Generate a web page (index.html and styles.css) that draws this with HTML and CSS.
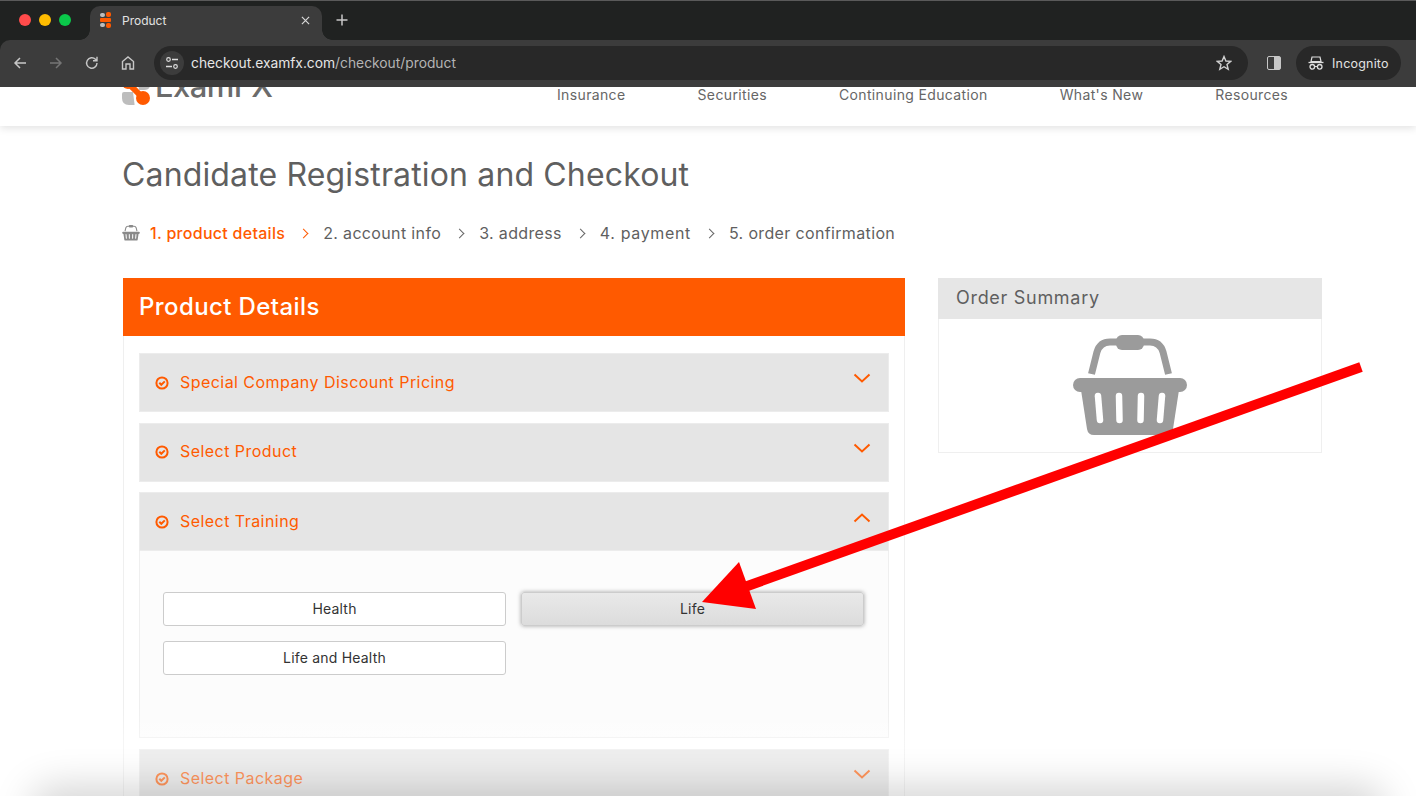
FILE: index.html
```html
<!DOCTYPE html>
<html lang="en">
<head>
	<meta charset="UTF-8">
	<title>Product</title>
	<link rel="stylesheet" href="styles.css">
</head>
<body>
<svg class="defs" width="0" height="0">
	<symbol id="basket" viewBox="0 0 116 102">
		<path d="M19.500 39 L25 17 Q28 7 38 7 H78 Q88 7 91 17 L96.500 39" fill="none" stroke="currentColor" stroke-width="7"/>
		<rect x="44" y="0" width="28" height="15" rx="6" fill="currentColor"/>
		<rect x="1" y="43" width="114" height="14" rx="7" fill="currentColor"/>
		<path d="M9 55 H107 L101 94 Q100 100 94 100 H22 Q16 100 15 94 Z" fill="currentColor"/>
		<g stroke="#fff" stroke-width="6.500" stroke-linecap="round">
			<line x1="26" y1="61" x2="28" y2="85"/>
			<line x1="47" y1="61" x2="47.500" y2="85"/>
			<line x1="69" y1="61" x2="68.500" y2="85"/>
			<line x1="90" y1="61" x2="88" y2="85"/>
		</g>
	</symbol>
	<symbol id="check" viewBox="0 0 14 14">
		<circle cx="7" cy="7" r="5.600" fill="none" stroke="currentColor" stroke-width="2"/>
		<path d="M4.300 6.800 L6.300 8.800 L9.800 5.400" fill="none" stroke="currentColor" stroke-width="2"/>
	</symbol>
	<symbol id="down" viewBox="0 0 18 10">
		<path d="M1.500 1.500 L9 8.500 L16.500 1.500" fill="none" stroke="currentColor" stroke-width="2"/>
	</symbol>
	<symbol id="mark" viewBox="0 0 28 28">
		<circle cx="6" cy="6" r="6" fill="#ff5a00"/>
		<circle cx="21" cy="21" r="7" fill="#ff5a00"/>
		<path d="M6 6 L21 21" stroke="#ff5a00" stroke-width="6"/>
		<path d="M15 1 H28 V8 Q28 13 22 13 H17 Z" fill="#bdbdbd"/>
		<path d="M0 17 Q0 15 2 15 H11 L12.500 27 V28 H7 Q0 28 0 21 Z" fill="#bdbdbd"/>
	</symbol>
</svg>

<div class="window">
	<div class="chrome">
		<div class="tabstrip">
			<div class="lights">
				<span class="light red"></span>
				<span class="light yellow"></span>
				<span class="light green"></span>
			</div>
			<div class="tab">
				<svg class="favicon" viewBox="0 0 12 16">
					<rect x="0" y="1" width="5" height="4" rx="2" fill="#bdbdbd"/>
					<rect x="6" y="0" width="5" height="5" rx="2" fill="#ff5a00"/>
					<rect x="0" y="6" width="11" height="4" rx="1" fill="#ff5a00"/>
					<rect x="0" y="11" width="5" height="4" rx="2" fill="#bdbdbd"/>
					<rect x="6" y="11" width="5" height="5" rx="2" fill="#ff5a00"/>
				</svg>
				<span class="tab-title">Product</span>
				<svg class="tab-close" viewBox="0 0 10 10"><path d="M1 1 L9 9 M9 1 L1 9" stroke="#d8d8d8" stroke-width="1.300"/></svg>
			</div>
			<svg class="newtab" viewBox="0 0 12 12"><path d="M6 0.500 V11.500 M0.500 6 H11.500" stroke="#c8c8c8" stroke-width="1.500"/></svg>
		</div>

		<div class="toolbar">
			<span class="tool"><svg viewBox="0 0 16 16"><path d="M14 8 H3 M8 3 L3 8 L8 13" fill="none" stroke="#c7c7c7" stroke-width="1.500"/></svg></span>
			<span class="tool"><svg viewBox="0 0 16 16"><path d="M2 8 H13 M8 3 L13 8 L8 13" fill="none" stroke="#757575" stroke-width="1.500"/></svg></span>
			<span class="tool"><svg viewBox="0 0 16 16"><path d="M13 8 A5.200 5.200 0 1 1 11.500 4.300 L13 5.800 M13 1.800 V5.800 H9" fill="none" stroke="#c7c7c7" stroke-width="1.400"/></svg></span>
			<span class="tool"><svg viewBox="0 0 16 16"><path d="M2.500 14 V6.500 L8 2 L13.500 6.500 V14 H10 V9 H6 V14 Z" fill="none" stroke="#c7c7c7" stroke-width="1.400"/></svg></span>
			<div class="address">
				<span class="site-info"><svg viewBox="0 0 14 14" width="14" height="14"><circle cx="3.500" cy="3.500" r="1.800" fill="none" stroke="#ddd" stroke-width="1.200"/><path d="M7 3.500 H13 M1 10.500 H7" stroke="#ddd" stroke-width="1.300"/><circle cx="10.500" cy="10.500" r="1.800" fill="none" stroke="#ddd" stroke-width="1.200"/></svg></span>
				<span class="url">checkout.examfx.com<span class="url-path">/checkout/product</span></span>
				<svg class="star" viewBox="0 0 16 16"><path d="M8 1.500 L9.900 6 L14.700 6.400 L11 9.500 L12.200 14.300 L8 11.700 L3.800 14.300 L5 9.500 L1.300 6.400 L6.100 6 Z" fill="none" stroke="#d0d0d0" stroke-width="1.400"/></svg>
			</div>
			<span class="sidepanel"><span class="sidepanel-fill"></span></span>
			<div class="incognito">
				<svg viewBox="0 0 16 14" width="16" height="14"><path d="M4 1 H12 L13 5.500 H3 Z" fill="none" stroke="#ddd" stroke-width="1.200"/><path d="M0.500 6.500 H15.500" stroke="#ddd" stroke-width="1.300"/><circle cx="4.300" cy="10.800" r="2.300" fill="none" stroke="#ddd" stroke-width="1.300"/><circle cx="11.700" cy="10.800" r="2.300" fill="none" stroke="#ddd" stroke-width="1.300"/><path d="M6.600 10.500 H9.400" stroke="#ddd" stroke-width="1.100"/></svg>
				<span>Incognito</span>
			</div>
		</div>
	</div>

	<div class="page">
		<header class="site-head">
			<div class="logo">
				<svg class="logo-mark"><use href="#mark"/></svg>
				<span class="logo-text">ExamFX</span>
			</div>
			<nav class="site-nav">
				<a>Insurance</a>
				<a>Securities</a>
				<a>Continuing Education</a>
				<a>What's New</a>
				<a>Resources</a>
			</nav>
		</header>

		<main class="content">
			<h1 class="title">Candidate Registration and Checkout</h1>

			<div class="steps">
				<svg class="steps-basket"><use href="#basket"/></svg>
				<span class="step step-active">1. product details</span>
				<span class="sep sep-active"></span>
				<span class="step">2. account info</span>
				<span class="sep"></span>
				<span class="step">3. address</span>
				<span class="sep"></span>
				<span class="step step-wide">4. payment</span>
				<span class="sep"></span>
				<span class="step">5. order confirmation</span>
			</div>

			<div class="columns">
				<section class="details">
					<h2 class="details-head">Product Details</h2>
					<div class="details-body">
						<div class="acc-head">
							<svg class="acc-check"><use href="#check"/></svg>
							<span class="acc-title">Special Company Discount Pricing</span>
							<svg class="acc-arrow"><use href="#down"/></svg>
						</div>
						<div class="acc-head">
							<svg class="acc-check"><use href="#check"/></svg>
							<span class="acc-title">Select Product</span>
							<svg class="acc-arrow"><use href="#down"/></svg>
						</div>
						<div class="acc-head acc-open">
							<svg class="acc-check"><use href="#check"/></svg>
							<span class="acc-title">Select Training</span>
							<svg class="acc-arrow acc-arrow-up"><use href="#down"/></svg>
						</div>
						<div class="acc-body">
							<button class="choice">Health</button>
							<button class="choice choice-on">Life</button>
							<button class="choice">Life and Health</button>
						</div>
						<div class="acc-head">
							<svg class="acc-check"><use href="#check"/></svg>
							<span class="acc-title">Select Package</span>
							<svg class="acc-arrow"><use href="#down"/></svg>
						</div>
					</div>
				</section>

				<aside class="summary">
					<h3 class="summary-head">Order Summary</h3>
					<div class="summary-body">
						<svg class="summary-basket"><use href="#basket"/></svg>
					</div>
				</aside>
			</div>
		</main>

		<div class="fade"></div>
		<div class="window-shadow"></div>
		<svg class="annotation" viewBox="0 0 1416 709" width="1416" height="709">
			<line x1="1361" y1="280" x2="725" y2="507" stroke="#ff0000" stroke-width="10"/>
			<polygon points="739,475 756,522 702,515" fill="#ff0000"/>
		</svg>
	</div>
</div>
</body>
</html>
```

FILE: styles.css
```css
body,html{
    padding: 0;
    margin: 0;
    height: 100%;
    overflow: hidden;
    font-family: "Inter", "Liberation Sans", sans-serif;
    color: #5f5f5f;
    background: #ffffff;
}
.defs{
    display: block;
}
.window{
    height: 796px;
    overflow: hidden;
}

/* browser chrome */
.chrome{
    background: #202221;
}
.tabstrip{
    height: 39px;
    border-top: 1px solid #5a5a5a;
    display: flex;
    align-items: flex-end;
}
.lights{
    display: flex;
    gap: 8px;
    padding: 0 0 14px 19px;
    width: 71px;
}
.light{
    width: 12px;
    height: 12px;
    border-radius: 50%;
}
.red{ background: #ff4b4b; }
.yellow{ background: #febc00; }
.green{ background: #0ac84a; }
.tab{
    position: relative;
    width: 232px;
    height: 34px;
    background: #3c3c3c;
    border-radius: 10px 10px 0 0;
    display: flex;
    align-items: center;
    box-sizing: border-box;
    padding: 0 0 6px 10px;
}
.tab::before,
.tab::after{
    content: "";
    position: absolute;
    bottom: 0;
    width: 10px;
    height: 10px;
}
.tab::before{
    left: -10px;
    background: radial-gradient(circle at 0 0, transparent 9.500px, #3c3c3c 10px);
}
.tab::after{
    right: -10px;
    background: radial-gradient(circle at 100% 0, transparent 9.500px, #3c3c3c 10px);
}
.favicon{
    width: 12px;
    height: 16px;
}
.tab-title{
    margin-left: 10px;
    font-size: 12px;
    color: #e2e2e2;
    flex: 1;
}
.tab-close{
    width: 9px;
    height: 9px;
    margin-right: 12px;
}
.newtab{
    width: 12px;
    height: 12px;
    margin: 0 0 14px 14px;
}
.toolbar{
    height: 47px;
    background: #3c3c3c;
    border-radius: 10px 0 0 0;
    display: flex;
    align-items: center;
    padding: 0 15px 1px 2px;
    box-sizing: border-box;
}
.tool{
    width: 36px;
    display: flex;
    justify-content: center;
}
.tool svg{
    width: 16px;
    height: 16px;
}
.address{
    flex: 1;
    height: 34px;
    margin-left: 8px;
    background: #282828;
    border-radius: 17px;
    display: flex;
    align-items: center;
    padding: 0 16px 0 6px;
}
.site-info{
    width: 24px;
    height: 24px;
    background: #3c3c3c;
    border-radius: 50%;
    display: flex;
    align-items: center;
    justify-content: center;
}
.url{
    margin-left: 7px;
    font-size: 13.800px;
    color: #e6e6e6;
    flex: 1;
}
.url-path{
    color: #b4b4b4;
}
.star{
    width: 16px;
    height: 16px;
}
.sidepanel{
    width: 14px;
    height: 14px;
    margin: 0 15px 0 19px;
    border: 1px solid #c7c7c7;
    border-radius: 2px;
    box-sizing: border-box;
    display: flex;
    justify-content: flex-end;
}
.sidepanel-fill{
    width: 6px;
    background: #c7c7c7;
}
.incognito{
    width: 105px;
    height: 34px;
    background: #282828;
    border-radius: 17px;
    display: flex;
    align-items: center;
    gap: 8px;
    padding-left: 12px;
    box-sizing: border-box;
    font-size: 12.500px;
    letter-spacing: 0.200px;
    color: #e2e2e2;
}

/* site */
.page{
    position: relative;
    height: 709px;
    overflow: hidden;
}
.site-head{
    height: 39px;
    padding-left: 122px;
    display: flex;
    overflow: hidden;
    box-shadow: 0 2px 8px rgba(0,0,0,0.12);
    position: relative;
}
.logo{
    width: 435px;
    height: 18px;
    display: flex;
    align-items: flex-end;
}
.logo-mark{
    width: 28px;
    height: 28px;
    flex: none;
}
.logo-text{
    margin: 0 0 4px 5px;
    font-size: 31px;
    line-height: 31px;
    font-weight: 500;
    letter-spacing: -0.600px;
    color: #6b6b6b;
}
.site-nav{
    display: flex;
    gap: 72px;
    font-size: 14px;
    line-height: 16px;
    letter-spacing: 0.360px;
    color: #666666;
}
.content{
    padding: 0 0 0 122px;
}
.title{
    margin: 0;
    padding-top: 30px;
    font-size: 32px;
    line-height: 38px;
    font-weight: 400;
    letter-spacing: 0.150px;
    color: #5f5f5f;
}
.steps{
    margin-top: 29px;
    height: 20px;
    display: flex;
    align-items: center;
    font-size: 16px;
    letter-spacing: 0.350px;
}
.steps-basket{
    width: 18px;
    height: 16px;
    color: #8a8a8a;
    margin-right: 10px;
}
.step-active{
    color: #ff5a00;
    font-weight: 500;
    letter-spacing: 0.280px;
}
.step-wide{
    letter-spacing: 0.650px;
}
.sep{
    width: 6px;
    height: 6px;
    margin: 0 16px 0 15px;
    border-top: 1px solid #666666;
    border-right: 1px solid #666666;
    transform: rotate(45deg);
}
.sep-active{
    border-color: #ff5a00;
}
.columns{
    margin: 35px 0 0 1px;
    display: flex;
    align-items: flex-start;
    gap: 33px;
}
.details{
    width: 782px;
    height: 600px;
    flex: none;
}
.details-head{
    margin: 0;
    height: 58px;
    padding-left: 16px;
    background: #ff5a00;
    color: #ffffff;
    font-size: 24px;
    line-height: 58px;
    font-weight: 500;
    letter-spacing: 0.400px;
}
.details-body{
    height: 542px;
    border: 1px solid #efefef;
    border-top: 0;
    padding: 17px 15px 0;
    box-sizing: border-box;
}
.acc-head{
    height: 59px;
    margin-bottom: 10.500px;
    background: #e5e5e5;
    box-sizing: border-box;
    border: 1px solid #ececec;
    display: flex;
    align-items: center;
    padding: 0 17px 0 15px;
    color: #ff5a00;
}
.acc-open{
    margin-bottom: 0;
}
.acc-check{
    width: 14px;
    height: 14px;
}
.acc-title{
    flex: 1;
    margin-left: 11px;
    padding-bottom: 2px;
    font-size: 16px;
    letter-spacing: 0.450px;
}
.acc-arrow{
    width: 18px;
    height: 10px;
    margin-top: -9px;
}
.acc-arrow-up{
    margin-top: -8px;
    transform: rotate(180deg);
}
.acc-body{
    height: 187px;
    margin-bottom: 11px;
    box-sizing: border-box;
    background: #fcfcfc;
    border: 1px solid #efefef;
    border-top: 0;
    padding: 41px 23px 0;
    display: grid;
    grid-template-columns: 343px 343px;
    grid-auto-rows: 34px;
    gap: 15px;
}
.choice{
    margin: 0;
    padding: 0 0 2px;
    background: #ffffff;
    border: 1px solid #cccccc;
    border-radius: 3px;
    font-family: inherit;
    font-size: 14px;
    letter-spacing: 0.200px;
    color: #333333;
}
.choice-on{
    background: linear-gradient(#e9e9e9, #dcdcdc);
    box-shadow: 0 0 4px rgba(0,0,0,0.35);
}
.summary{
    width: 384px;
    flex: none;
    border: 1px solid #efefef;
    border-top: 0;
    box-sizing: border-box;
}
.summary-head{
    margin: 0 -1px;
    height: 41px;
    padding-left: 18px;
    background: #e6e6e6;
    font-size: 18px;
    line-height: 40px;
    font-weight: 400;
    letter-spacing: 0.700px;
}
.summary-body{
    height: 133px;
    padding-top: 16px;
    box-sizing: border-box;
    display: flex;
    justify-content: center;
}
.summary-basket{
    width: 116px;
    height: 102px;
    color: #9b9b9b;
}

/* things laid over the page */
.fade{
    position: absolute;
    left: 0;
    right: 0;
    bottom: 0;
    height: 90px;
    background: linear-gradient(rgba(255,255,255,0), rgba(255,255,255,0.360) 40%);
}
.window-shadow{
    position: absolute;
    left: 40px;
    right: 40px;
    bottom: -30px;
    height: 30px;
    border-radius: 30px;
    box-shadow: 0 0 38px 10px rgba(0,0,0,0.170);
}
.annotation{
    position: absolute;
    left: 0;
    top: 0;
}
```
